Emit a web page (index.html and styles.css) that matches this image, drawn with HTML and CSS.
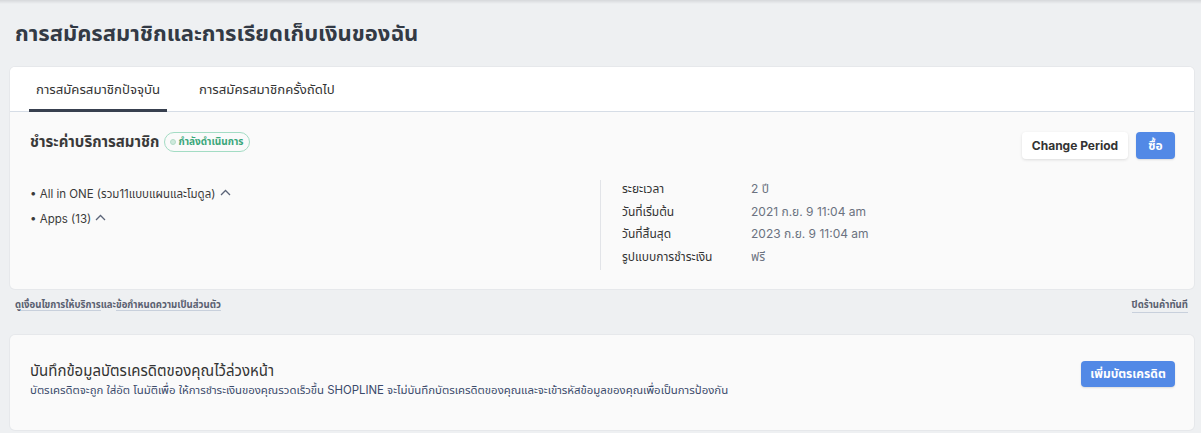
FILE: index.html
```html
<!DOCTYPE html>
<html lang="th">
<head>
<meta charset="utf-8">
<link rel="stylesheet" href="styles.css">
</head>
<body>
<div class="topshadow"></div>
<main class="page">
  <h1 class="page-title">การสมัครสมาชิกและการเรียดเก็บเงินของฉัน</h1>

  <section class="card">
    <nav class="tabs">
      <div class="tab active">การสมัครสมาชิกปัจจุบัน</div>
      <div class="tab">การสมัครสมาชิกครั้งถัดไป</div>
    </nav>
    <div class="card-body">
      <div class="plan-head">
        <div class="plan-title">
          <h2>ชำระค่าบริการสมาชิก</h2>
          <span class="badge"><span class="dot"></span>กำลังดำเนินการ</span>
        </div>
        <div class="actions">
          <button class="btn btn-white">Change Period</button>
          <button class="btn btn-blue">ซื้อ</button>
        </div>
      </div>
      <div class="plan-info">
        <ul class="plan-list">
          <li>• All in ONE (รวม11แบบแผนและโมดูล) <span class="caret"><svg width="11" height="7" viewBox="0 0 11 7"><path d="M1 6 L5.5 1.5 L10 6" fill="none" stroke="#5b6478" stroke-width="1.3"/></svg></span></li>
          <li>• Apps (13) <span class="caret"><svg width="11" height="7" viewBox="0 0 11 7"><path d="M1 6 L5.5 1.5 L10 6" fill="none" stroke="#5b6478" stroke-width="1.3"/></svg></span></li>
        </ul>
        <dl class="details">
          <div class="row"><dt>ระยะเวลา</dt><dd>2 ปี</dd></div>
          <div class="row"><dt>วันที่เริ่มต้น</dt><dd>2021 ก.ย. 9 11:04 am</dd></div>
          <div class="row"><dt>วันที่สิ้นสุด</dt><dd>2023 ก.ย. 9 11:04 am</dd></div>
          <div class="row"><dt>รูปแบบการชำระเงิน</dt><dd>ฟรี</dd></div>
        </dl>
      </div>
    </div>
  </section>

  <div class="links">
    <div class="left-links">ดู<a href="#">เงื่อนไขการให้บริการ</a>และ<a href="#">ข้อกำหนดความเป็นส่วนตัว</a></div>
    <a href="#" class="close-link">ปิดร้านค้าทันที</a>
  </div>

  <section class="card card-credit">
    <div class="credit-text">
      <h3>บันทึกข้อมูลบัตรเครดิตของคุณไว้ล่วงหน้า</h3>
      <p>บัตรเครดิตจะถูก ใส่อัต โนมัติเพื่อ ให้การชำระเงินของคุณรวดเร็วขึ้น SHOPLINE จะไม่บันทึกบัตรเครดิตของคุณและจะเข้ารหัสข้อมูลของคุณเพื่อเป็นการป้องกัน</p>
    </div>
    <button class="btn btn-blue btn-credit">เพิ่มบัตรเครดิต</button>
  </section>
</main>
</body>
</html>
```

FILE: styles.css
```css
* { box-sizing: border-box; }
html, body { margin: 0; padding: 0; }
body {
  background: #eef0f2;
  font-family: "Inter", "Noto Sans", "Noto Sans Thai", "Loma", "Garuda", sans-serif;
  color: #333;
  width: 1201px;
  height: 433px;
  overflow: hidden;
  position: relative;
}
.topshadow {
  height: 4px;
  background: linear-gradient(#d6d8db, #eef0f2);
}
.page {
  padding: 0 7px 0 10px;
}
.page-title {
  margin: 0;
  padding: 14px 0 0 5px;
  height: 63px;
  font-size: 22px;
  font-weight: 700;
  color: #333a45;
  line-height: 30px;
}
.card {
  background: #fafafa;
  border-radius: 5px;
  box-shadow: 0 0 0 1px #e6e8eb;
}
.tabs {
  display: flex;
  gap: 25px;
  padding: 0 19px;
  height: 45px;
  background: #fff;
  border-bottom: 1px solid #d6dde6;
  border-radius: 5px 5px 0 0;
}
.tab {
  padding: 0 7px;
  font-size: 13.2px;
  line-height: 44px;
  color: #333;
  border-bottom: 3px solid transparent;
  height: 45px;
  margin-bottom: -1px;
}
.tab.active {
  border-bottom-color: #38404f;
}
.card-body {
  padding: 20px 19px 19px 20px;
}
.plan-head {
  display: flex;
  justify-content: space-between;
  align-items: flex-start;
}
.plan-title {
  display: flex;
  align-items: center;
  gap: 5px;
  height: 20px;
}
.plan-title h2 {
  margin: 0;
  font-size: 15px;
  font-weight: 700;
  color: #3a3a3a;
}
.badge {
  display: inline-flex;
  align-items: center;
  gap: 2px;
  height: 20px;
  padding: 0 6px 0 5px;
  border: 1px solid #a3dcc4;
  border-radius: 10px;
  font-size: 10px;
  font-weight: 700;
  color: #3aa77a;
}
.dot {
  width: 6px;
  height: 6px;
  border-radius: 50%;
  background: #cfe9dc;
  border: 1px solid #b3dcc8;
}
.actions {
  display: flex;
  gap: 8px;
}
.btn {
  height: 27px;
  border: none;
  border-radius: 4px;
  font-family: "Inter", "Noto Sans", "Noto Sans Thai", "Loma", sans-serif;
  font-size: 12px;
  font-weight: 700;
  padding: 0 13px;
  cursor: pointer;
}
.btn-white {
  background: #fff;
  color: #333;
  box-shadow: 0 1px 3px rgba(0,0,0,0.12);
  width: 106px;
  padding: 0;
}
.btn-blue {
  background: #5289e6;
  color: #fff;
  box-shadow: 0 1px 2px rgba(0,0,0,0.12);
}
.actions .btn-blue { width: 39px; padding: 0; }
.plan-info {
  display: flex;
  margin-top: 21px;
}
.plan-list {
  list-style: none;
  margin: 0;
  padding: 4px 0 0;
  width: 570px;
  font-size: 11.5px;
  color: #3a3a3a;
}
.plan-list li {
  height: 25px;
  line-height: 16px;
}
.caret {
  display: inline-block;
  vertical-align: 2px;
  margin-left: 1px;
}
.details {
  margin: 0;
  padding: 0 0 0 21px;
  border-left: 1px solid #e2e4e8;
  font-size: 12px;
  height: 90px;
}
.row {
  display: flex;
  height: 22.5px;
  align-items: center;
}
.row:first-child { margin-top: -2px; }
.row dt {
  width: 129px;
  color: #333;
}
.row dd {
  margin: 0;
  color: #6b7280;
}
.links {
  display: flex;
  justify-content: space-between;
  align-items: flex-start;
  height: 46px;
  padding: 9px 6px 0 5px;
  font-size: 9.6px;
  font-weight: 700;
  color: #5a6070;
}
.links a {
  color: #5a6070;
  text-decoration: none;
  border-bottom: 1px solid #c8d0dc;
}
.card-credit {
  display: flex;
  align-items: flex-start;
  justify-content: space-between;
  height: 95px;
  padding: 26px 19px 0 20px;
}
.credit-text h3 {
  margin: 0;
  font-size: 15px;
  line-height: 20px;
  font-weight: 400;
  color: #333;
}
.credit-text p {
  margin: 0;
  font-size: 11.4px;
  line-height: 18px;
  color: #3a4a6b;
}
.btn-credit {
  width: 94px;
  padding: 0;
  height: 26px;
}
```
